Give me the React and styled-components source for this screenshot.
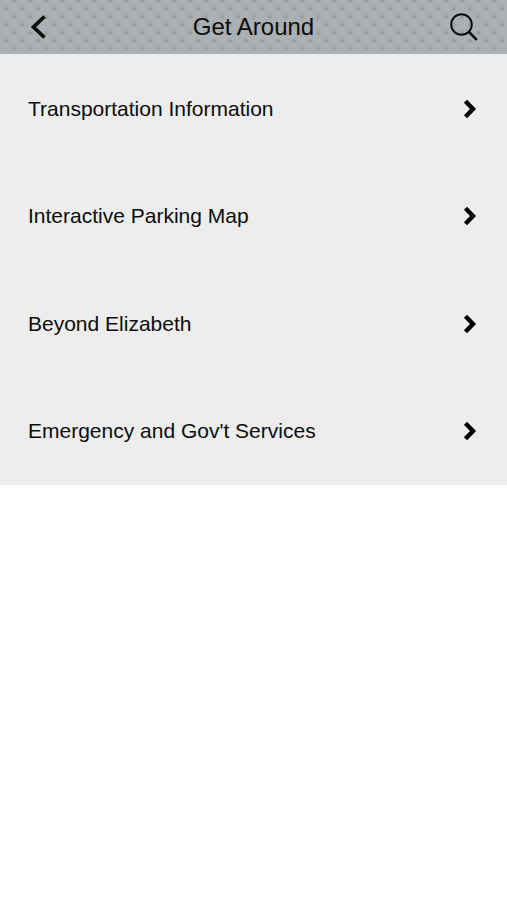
import React from "react";
import styled, { createGlobalStyle } from "styled-components";

const GlobalStyle = createGlobalStyle`
  body {
    margin: 0;
    background: #ffffff;
    color: #0c0c0c;
    font-family: "Liberation Sans", Arial, Helvetica, sans-serif;
  }
`;

const Header = styled.header`
  display: grid;
  grid-template-columns: 61px 1fr 61px;
  align-items: center;
  height: 54px;
  padding: 0 10px;
  background-color: #abb0b2;
  background-image: radial-gradient(circle, #999ea1 1px, transparent 3px),
    radial-gradient(circle, #999ea1 1px, transparent 3px);
  background-size: 16px 16px;
  background-position: -2px 1px, 6px 9px;
`;

const Title = styled.h1`
  margin: 0;
  font-size: 24px;
  font-weight: normal;
  line-height: 28px;
  text-align: center;
`;

const IconButton = styled.button`
  display: flex;
  align-items: center;
  justify-content: center;
  width: 56px;
  height: 44px;
  padding: 0;
  border: none;
  background: none;
  color: #0c0c0c;
  cursor: pointer;
`;

const Menu = styled.ul`
  display: grid;
  grid-auto-rows: 1fr;
  min-height: 430px;
  margin: 0;
  padding: 1px 0 0;
  list-style: none;
  background: #ededed;
`;

const MenuItem = styled.li`
  display: flex;
`;

const MenuLink = styled.a`
  display: flex;
  flex: 1;
  align-items: center;
  justify-content: space-between;
  padding: 0 30px 0 28px;
  color: inherit;
  font-size: 21px;
  line-height: 24px;
  text-decoration: none;
`;

const items = [
  "Transportation Information",
  "Interactive Parking Map",
  "Beyond Elizabeth",
  "Emergency and Gov't Services",
];

function BackIcon() {
  return (
    <svg width="18" height="26" viewBox="0 0 18 26" fill="none" aria-hidden="true">
      <path d="M15.5 2.5 L4.5 13 L15.5 23.5" stroke="#0c0c0c" strokeWidth="3.8" />
    </svg>
  );
}

function SearchIcon() {
  return (
    <svg width="30" height="30" viewBox="0 0 30 30" fill="none" aria-hidden="true">
      <circle cx="12.5" cy="12.5" r="10.3" stroke="#0c0c0c" strokeWidth="1.9" />
      <path d="M20 20 L27.8 27.8" stroke="#0c0c0c" strokeWidth="2.5" />
    </svg>
  );
}

function ChevronIcon() {
  return (
    <svg width="14" height="20" viewBox="0 0 14 20" fill="none" aria-hidden="true">
      <path d="M2.5 2.2 L10 10 L2.5 17.8" stroke="#000000" strokeWidth="4.4" />
    </svg>
  );
}

export default function App() {
  return (
    <>
      <GlobalStyle />
      <Header>
        <IconButton type="button" aria-label="Back">
          <BackIcon />
        </IconButton>
        <Title>Get Around</Title>
        <IconButton type="button" aria-label="Search">
          <SearchIcon />
        </IconButton>
      </Header>
      <Menu>
        {items.map((item) => (
          <MenuItem key={item}>
            <MenuLink href="#">
              {item}
              <ChevronIcon />
            </MenuLink>
          </MenuItem>
        ))}
      </Menu>
    </>
  );
}
